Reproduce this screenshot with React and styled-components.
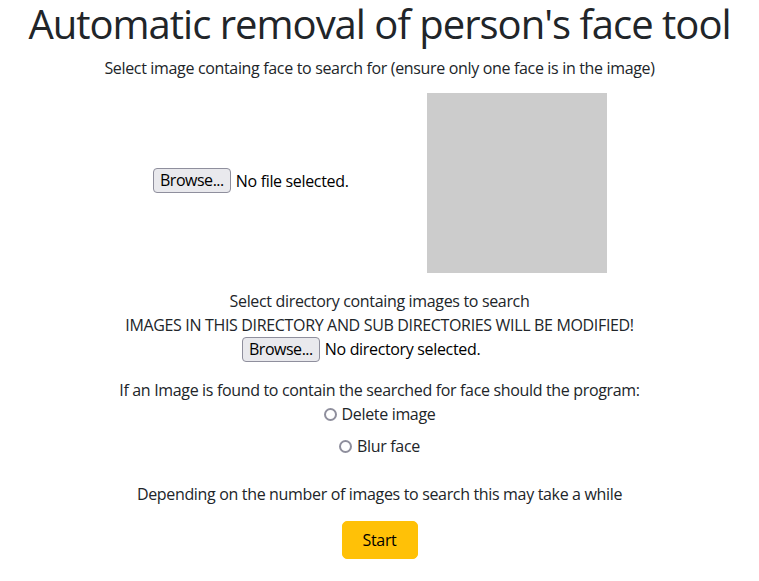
import React from "react";
import styled, { createGlobalStyle } from "styled-components";

const GlobalStyle = createGlobalStyle`
  html, body {
    margin: 0;
    padding: 0;
    background: #ffffff;
  }
  body {
    font-family: "Open Sans", "Noto Sans", sans-serif;
    font-size: 16px;
    line-height: 1.5;
    color: #212529;
    letter-spacing: -0.021em;
  }
  * { box-sizing: border-box; }
`;

const Page = styled.main`
  text-align: center;
`;

const Title = styled.h1`
  margin: 0 0 8px;
  font-size: 40px;
  font-weight: 400;
  line-height: 1.2;
  letter-spacing: -0.025em;
`;

const Line = styled.p`
  margin: 0;
  margin-top: ${(p) => p.$gap || 0}px;
  line-height: 24px;
`;

const Row = styled.section`
  display: grid;
  grid-template-columns: 270px 270px;
  justify-content: center;
  align-items: center;
  margin-top: 13px;
`;

const Col = styled.div`
  display: flex;
  justify-content: center;
  padding-left: ${(p) => p.$shift || 0}px;
  padding-bottom: ${(p) => p.$lift || 0}px;
`;

const Placeholder = styled.div`
  width: 180px;
  height: 180px;
  background: #cccccc;
`;

const FileRow = styled.div`
  display: flex;
  align-items: center;
  justify-content: flex-start;
  gap: 5px;
  width: ${(p) => p.$width}px;
  height: 24px;
  margin: 0 auto;
  line-height: 24px;
  text-align: left;
`;

const BrowseButton = styled.button`
  font-family: inherit;
  font-size: 16px;
  letter-spacing: -0.03em;
  line-height: 19px;
  color: #000;
  background: #e9e9ed;
  border: 1px solid #8f8f9d;
  border-radius: 4px;
  padding: 2px 6px;
  height: 25px;
  flex: none;
  cursor: pointer;
`;

const FileLabel = styled.span`
  color: #000;
  white-space: nowrap;
`;

const RadioRow = styled.label`
  display: flex;
  justify-content: center;
  align-items: center;
  gap: 5px;
  line-height: 24px;
  margin-top: ${(p) => p.$gap || 0}px;
`;

const Radio = styled.input.attrs({ type: "radio" })`
  appearance: none;
  width: 13px;
  height: 13px;
  margin: 0;
  border: 2px solid #8f8f9d;
  border-radius: 50%;
  background: #fff;
`;

const StartButton = styled.button`
  margin-top: 15px;
  font-family: inherit;
  font-size: 16px;
  letter-spacing: inherit;
  line-height: 24px;
  color: #000;
  background: #ffc107;
  border: 1px solid #ffc107;
  border-radius: 5px;
  padding: 6px 0;
  width: 76px;
  cursor: pointer;
`;

export default function App() {
  return (
    <>
      <GlobalStyle />
      <Page>
        <Title>Automatic removal of person's face tool</Title>
        <Line>Select image containg face to search for (ensure only one face is in the image)</Line>
        <Row>
          <Col $lift={5}>
            <FileRow $width={183}>
              <BrowseButton>Browse...</BrowseButton>
              <FileLabel>No file selected.</FileLabel>
            </FileRow>
          </Col>
          <Col $shift={5}>
            <Placeholder />
          </Col>
        </Row>
        <Line $gap={16}>Select directory containg images to search</Line>
        <Line>IMAGES IN THIS DIRECTORY AND SUB DIRECTORIES WILL BE MODIFIED!</Line>
        <FileRow $width={275}>
          <BrowseButton>Browse...</BrowseButton>
          <FileLabel>No directory selected.</FileLabel>
        </FileRow>
        <Line $gap={17}>If an Image is found to contain the searched for face should the program:</Line>
        <RadioRow>
          <Radio name="action" value="delete" />
          Delete image
        </RadioRow>
        <RadioRow $gap={8}>
          <Radio name="action" value="blur" />
          Blur face
        </RadioRow>
        <Line $gap={24}>Depending on the number of images to search this may take a while</Line>
        <StartButton>Start</StartButton>
      </Page>
    </>
  );
}
